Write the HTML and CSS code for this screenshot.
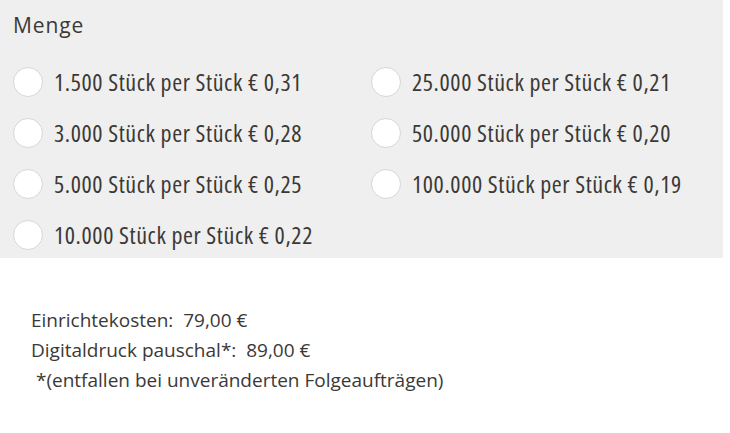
FILE: index.html
```html
<!DOCTYPE html>
<html lang="de">
<head>
<meta charset="utf-8">
<link rel="stylesheet" href="styles.css">
</head>
<body>
<section class="panel">
  <h2 class="title">Menge</h2>
  <div class="options">
    <label class="opt"><span class="radio"></span><span class="txt">1.500 Stück per Stück € 0,31</span></label>
    <label class="opt"><span class="radio"></span><span class="txt">25.000 Stück per Stück € 0,21</span></label>
    <label class="opt"><span class="radio"></span><span class="txt">3.000 Stück per Stück € 0,28</span></label>
    <label class="opt"><span class="radio"></span><span class="txt">50.000 Stück per Stück € 0,20</span></label>
    <label class="opt"><span class="radio"></span><span class="txt">5.000 Stück per Stück € 0,25</span></label>
    <label class="opt"><span class="radio"></span><span class="txt">100.000 Stück per Stück € 0,19</span></label>
    <label class="opt"><span class="radio"></span><span class="txt">10.000 Stück per Stück € 0,22</span></label>
  </div>
</section>
<div class="costs">
  <p>Einrichtekosten:&nbsp; 79,00 €</p>
  <p>Digitaldruck pauschal*:&nbsp; 89,00 €</p>
  <p>&nbsp;*(entfallen bei unveränderten Folgeaufträgen)</p>
</div>
</body>
</html>
```
FILE: styles.css
```css
html, body {
  margin: 0;
  padding: 0;
  background: #ffffff;
}
body {
  width: 730px;
  height: 433px;
  overflow: hidden;
  color: #3b3936;
  font-family: "Open Sans", sans-serif;
}
.panel {
  width: 723px;
  height: 258px;
  box-sizing: border-box;
  background: #efefef;
  padding: 10px 0 0 13px;
}
.title {
  margin: 0;
  font-weight: 400;
  font-size: 21px;
  letter-spacing: 0.9px;
  line-height: 30px;
  color: #3b3936;
}
.options {
  margin-top: 27px;
  display: grid;
  grid-template-columns: 358px 352px;
  row-gap: 21px;
}
.opt {
  display: flex;
  align-items: center;
  gap: 11px;
  height: 30px;
}
.radio {
  flex: none;
  width: 28px;
  height: 28px;
  border-radius: 50%;
  background: #ffffff;
  border: 1px solid #d6d6d6;
}
.txt {
  font-size: 24px;
  font-stretch: 75%;
  font-weight: 400;
  letter-spacing: 0.6px;
  line-height: 30px;
  white-space: nowrap;
}
.costs {
  padding: 47px 0 0 31px;
}
.costs p {
  margin: 0;
  font-size: 19px;
  line-height: 30px;
  white-space: nowrap;
}
```
